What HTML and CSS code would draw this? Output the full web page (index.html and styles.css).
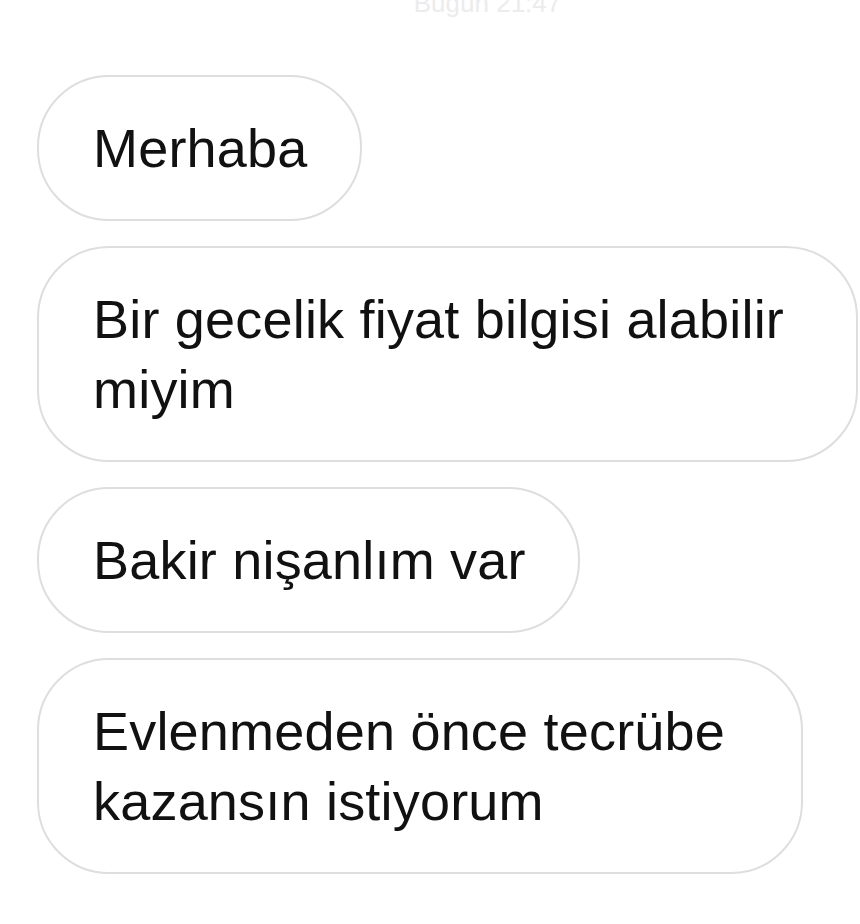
FILE: index.html
```html
<!DOCTYPE html>
<html lang="tr">
<head>
    <meta charset="UTF-8">
    <meta name="viewport" content="width=device-width, initial-scale=1.0">
    <title>Mesajlar</title>
    <link rel="stylesheet" href="styles.css">
</head>
<body>
    <div class="chat">
        <div class="stamp">Bugün 21:47</div>
        <div class="bubble">Merhaba</div>
        <div class="bubble">Bir gecelik fiyat bilgisi alabilir miyim</div>
        <div class="bubble">Bakir nişanlım var</div>
        <div class="bubble bubble-mid">Evlenmeden önce tecrübe kazansın istiyorum</div>
    </div>
</body>
</html>
```

FILE: styles.css
```css
body {
    margin: 0;
    padding: 0;
    background: #ffffff;
    font-family: "Liberation Sans", Arial, sans-serif;
    color: #111111;
    overflow: hidden;
    height: 924px;
}
.chat {
    display: flex;
    flex-direction: column;
    align-items: flex-start;
    gap: 25px;
    padding: 0 2px 0 37px;
}
.stamp {
    align-self: center;
    margin-top: -12px;
    margin-bottom: 32px;
    font-size: 26px;
    line-height: 30px;
    color: #ececec;
    padding-left: 80px;
}
.bubble {
    box-sizing: border-box;
    max-width: 100%;
    padding: 36px 52px 36px 54px;
    border: 2px solid #dedede;
    border-radius: 72px;
    font-size: 54px;
    line-height: 70px;
    letter-spacing: 0.2px;
}
.bubble-mid {
    width: 766px;
}
```
